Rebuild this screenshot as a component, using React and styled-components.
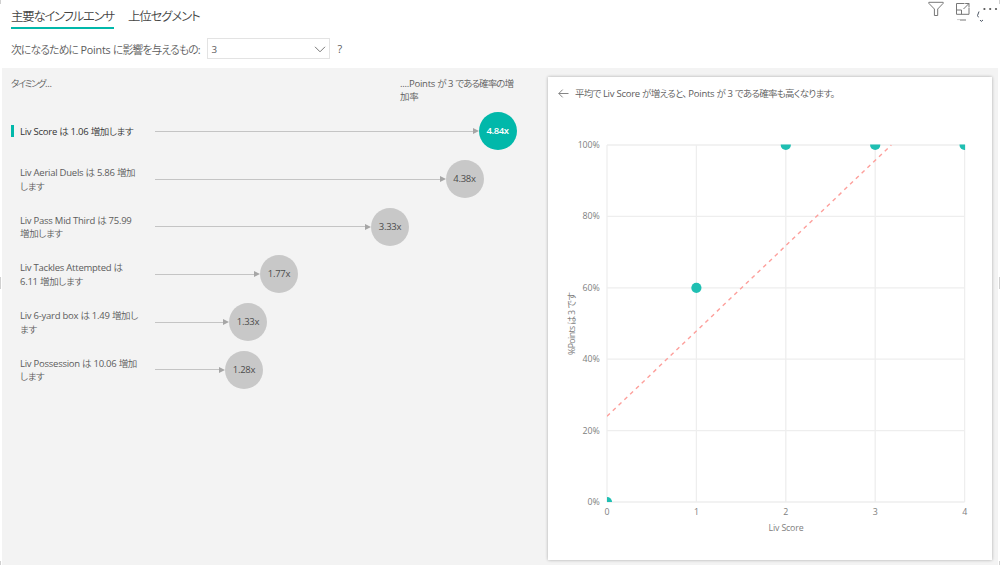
import React from "react";
import styled, { createGlobalStyle } from "styled-components";

const influencers = [
  { lines: ["Liv Score は 1.06 増加します"], value: "4.84x", arrow: 323.5, active: true },
  { lines: ["Liv Aerial Duels は 5.86 増加", "します"], value: "4.38x", arrow: 290.5 },
  { lines: ["Liv Pass Mid Third は 75.99", "増加します"], value: "3.33x", arrow: 216 },
  { lines: ["Liv Tackles Attempted は", "6.11 増加します"], value: "1.77x", arrow: 105 },
  { lines: ["Liv 6-yard box は 1.49 増加し", "ます"], value: "1.33x", arrow: 74 },
  { lines: ["Liv Possession は 10.06 増加", "します"], value: "1.28x", arrow: 70 },
];

const points = [[0, 0], [1, 60], [2, 100], [3, 100], [4, 100]];

// kana is set tighter than the latin text around it
function Mixed({ children, tight = -0.35 }) {
  return children
    .split(/([\u3000-\u9fff]+)/)
    .filter(Boolean)
    .map((run, i) =>
      /[\u3000-\u9fff]/.test(run) ? <Ja key={i} $tight={tight}>{run}</Ja> : <span key={i}>{run}</span>
    );
}

function Chart() {
  const x = (v) => 59 + v * 89.4;
  const y = (v) => 397 - v * 3.57;
  return (
    <Plot viewBox="0 0 444 440" width="444" height="440">
      <defs>
        <clipPath id="plot-area">
          <rect x={x(0)} y={y(100) - 0.5} width={x(4) - x(0) + 0.5} height={y(0) - y(100) + 0.5} />
        </clipPath>
      </defs>
      <g stroke="#eeeeee" strokeWidth="1.3">
        {[0, 1, 2, 3, 4].map((v) => <line key={v} x1={x(v)} x2={x(v)} y1={y(100)} y2={y(0)} />)}
        {[0, 20, 40, 60, 80, 100].map((v) => <line key={v} x1={x(0)} x2={x(4)} y1={y(v)} y2={y(v)} />)}
      </g>
      <g clipPath="url(#plot-area)">
        <line x1={x(0)} y1={y(24)} x2={x(3.18)} y2={y(100)} stroke="#fd9f9b" strokeWidth="1.4" strokeDasharray="4 4" />
        {points.map(([a, b]) => <circle key={a} cx={x(a)} cy={y(b)} r="5.1" fill="#1fbfb2" />)}
      </g>
      {[0, 20, 40, 60, 80, 100].map((v) => (
        <Tick key={v} x="51.5" y={y(v) + 3} textAnchor="end">{v}%</Tick>
      ))}
      {[0, 1, 2, 3, 4].map((v) => (
        <Tick key={v} x={x(v)} y="409.5" textAnchor="middle">{v}</Tick>
      ))}
      <Tick x="238" y="425.5" textAnchor="middle">Liv Score</Tick>
      <Tick transform="translate(27 218.5) rotate(-90)" textAnchor="middle" textLength="63">%Points は 3 です</Tick>
    </Plot>
  );
}

export default function App() {
  return (
    <Page>
      <Global />
      <Header>
        <Tabs>
          <Tab $active><Mixed tight={-1.2}>主要なインフルエンサ</Mixed></Tab>
          <Tab><Mixed tight={-1.1}>上位セグメント</Mixed></Tab>
        </Tabs>
        <Tools>
          <svg width="16" height="16" viewBox="0 0 16 16"><path d="M.8 1.3h14.4v1L9.7 8v6.5H6.4V8L.8 2.3z" /></svg>
          <svg width="16" height="20" viewBox="0 0 16 20">
            <path d="M9.5 2.5H1.5v10.8h12.5V7M1.5 9h5v4.3M10.2 2.5H14v4M8.5 8L14 2.5" />
            <path d="M2 18.6h3" stroke="#ccc" />
            <path d="M5 19h6" stroke="#777" />
          </svg>
          <svg width="23" height="22" viewBox="0 0 23 22">
            <g fill="#555" stroke="none">
              <circle cx="7.4" cy="9" r="1.1" /><circle cx="13.2" cy="9" r="1.1" /><circle cx="19" cy="9" r="1.1" />
            </g>
            <path d="M2 11.5L.5 15.5l1 1.8M3 20l1.3 1.4L6 20" stroke="#4b5563" />
          </svg>
        </Tools>
      </Header>
      <Question>
        <Prompt><Mixed tight={-0.85}>次になるために Points に影響を与えるもの:</Mixed></Prompt>
        <Select>
          3
          <svg width="12" height="7" viewBox="0 0 12 7"><path d="M1 .8l5 5 5-5" fill="none" stroke="#777" /></svg>
        </Select>
        <span>?</span>
      </Question>
      <Body>
        <Left>
          <Heads>
            <Head><Mixed tight={-1.5}>タイミング...</Mixed></Head>
            <Head>
              <div><Mixed tight={-0.9}>....Points が 3 である確率の増</Mixed></div>
              <div><Mixed>加率</Mixed></div>
            </Head>
          </Heads>
          {influencers.map((row) => (
            <Row key={row.value}>
              <Marker $active={row.active} />
              <Label $active={row.active}>
                {row.lines.map((l) => <div key={l}><Mixed>{l}</Mixed></div>)}
              </Label>
              <Arrow style={{ width: row.arrow }} />
              <Bubble $active={row.active}>{row.value}</Bubble>
            </Row>
          ))}
        </Left>
        <Card>
          <CardTitle>
            <svg width="11" height="9" viewBox="0 0 11 9"><path d="M10.5 4.5H.8M4.7.6L.8 4.5l3.9 3.9" fill="none" stroke="#777" strokeWidth=".9" /></svg>
            <div>
              <Mixed tight={-0.7}>平均で Liv Score が増えると、</Mixed>
              <Clause><Mixed tight={-0.7}>Points が 3 である確率も高くなります。</Mixed></Clause>
            </div>
          </CardTitle>
          <Chart />
        </Card>
      </Body>
      <Handle $side="left" $top={0} $size={4} />
      <Handle $side="right" $top={0} $size={4} />
      <Handle $side="left" $top={277} $size={12} />
      <Handle $side="right" $top={277} $size={12} />
      <Handle $side="left" $top={561} $size={4} />
      <Handle $side="right" $top={561} $size={4} />
    </Page>
  );
}

const Global = createGlobalStyle`
  * { box-sizing: border-box; }
  body {
    margin: 0;
    overflow: hidden;
    background: #fff;
  }
`;
const Page = styled.div`
  position: relative;
  display: flex;
  flex-direction: column;
  width: 1000px;
  height: 565px;
  font-family: "Open Sans", "Noto Sans CJK JP", sans-serif;
  font-size: 9.5px;
  letter-spacing: -0.25px;
  color: #5c5c5c;
  white-space: nowrap;
`;
const Ja = styled.span`
  font-family: "Noto Sans CJK JP", sans-serif;
  font-weight: 350;
  font-feature-settings: "palt";
  letter-spacing: ${(p) => p.$tight}px;
`;
const Header = styled.div`
  display: flex;
  justify-content: space-between;
  height: 30px;
  padding-left: 11px;
`;
const Tabs = styled.div`
  display: flex;
  gap: 14px;
`;
const Tab = styled.div`
  height: 29px;
  padding-top: 7px;
  font-size: 12.4px;
  line-height: 18px;
  color: #444;
  border-bottom: 2px solid ${(p) => (p.$active ? "#01b8aa" : "transparent")};
`;
const Tools = styled.div`
  display: flex;
  gap: 11px;
  padding-top: 1px;
  svg {
    fill: none;
    stroke: #777;
    stroke-width: 1;
  }
  svg + svg + svg {
    margin-left: -5px;
    margin-top: -1px;
  }
`;
const Question = styled.div`
  display: flex;
  align-items: center;
  height: 37.5px;
  padding-left: 11px;
  font-size: 10.8px;
  white-space: pre;
`;
const Prompt = styled.div`
  width: 195.5px;
`;
const Select = styled.div`
  display: flex;
  align-items: center;
  justify-content: space-between;
  width: 123px;
  height: 21px;
  margin-right: 8px;
  padding: 1px 3px 0 4px;
  font-size: 9.8px;
  border: 1px solid #e3e3e3;
`;
const Body = styled.div`
  display: flex;
  flex: 1;
  margin: 0 2px 0 1.5px;
  padding-top: 9px;
  background: #f3f3f3;
`;
const Left = styled.div`
  flex: none;
  width: 546.5px;
  padding-left: 9.5px;
`;
const Heads = styled.div`
  display: flex;
  height: 31px;
`;
const Head = styled.div`
  flex: none;
  width: 389px;
  line-height: 13px;

  & + & {
    width: 130px;
  }
`;
const Row = styled.div`
  display: flex;
  align-items: center;
  height: 47.7px;
`;
const Marker = styled.div`
  width: 3px;
  height: 12px;
  margin-right: 6px;
  background: ${(p) => (p.$active ? "#01b8aa" : "transparent")};
`;
const Label = styled.div`
  width: 135px;
  padding-top: 1px;
  line-height: 12.5px;
  color: ${(p) => (p.$active ? "#333" : "#5c5c5c")};
  font-weight: ${(p) => (p.$active ? 500 : 400)};
`;
const Arrow = styled.div`
  display: flex;
  align-items: center;
  &::before {
    content: "";
    flex: 1;
    height: 1px;
    background: #c4c4c4;
  }
  &::after {
    content: "";
    border: 3.5px solid transparent;
    border-top-width: 3px;
    border-left: 6px solid #a6a6a6;
    border-right: 0;
  }
`;
const Bubble = styled.div`
  width: 38px;
  height: 38px;
  border-radius: 50%;
  line-height: 38px;
  text-align: center;
  background: ${(p) => (p.$active ? "#01b8aa" : "#c8c8c8")};
  color: ${(p) => (p.$active ? "#fff" : "#4c4c4c")};
  font-weight: ${(p) => (p.$active ? 600 : 400)};
  letter-spacing: ${(p) => (p.$active ? -0.4 : -0.3)}px;
`;
const Card = styled.div`
  flex: none;
  width: 444px;
  height: 483px;
  background: #fff;
  box-shadow: 0 0 3px rgba(0, 0, 0, 0.3);
`;
const CardTitle = styled.div`
  display: flex;
  align-items: center;
  gap: 6px;
  height: 28px;
  padding: 6px 0 0 10px;

  div {
    margin-top: -2px;
  }
`;
const Clause = styled.span`
  margin-left: 2px;
`;
const Plot = styled.svg`
  display: block;
`;
const Tick = styled.text`
  font-size: 8.8px;
  letter-spacing: -0.15px;
  fill: #808080;
  white-space: pre;
`;
// resize grips sit over the frame's edges
const Handle = styled.div`
  position: absolute;
  top: ${(p) => p.$top}px;
  ${(p) => p.$side}: 0;
  width: 1px;
  height: ${(p) => p.$size}px;
  background: #d0d0d0;
`;
